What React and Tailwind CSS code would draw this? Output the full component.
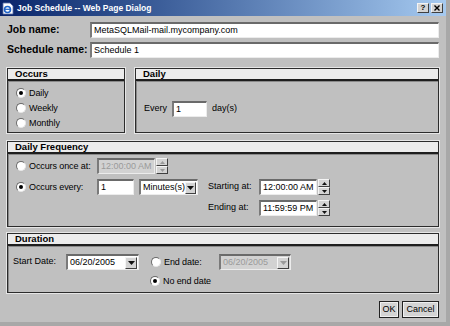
import React from 'react';

const FONT = { fontFamily: '"Liberation Sans", Arial, sans-serif' };

const sunken = 'border-t-2 border-l-2 border-b border-r border-t-[#6a6a6a] border-l-[#7a7a7a] border-b-[#ececec] border-r-[#ececec]';
const raised = 'border border-t-[#f4f4f4] border-l-[#f4f4f4] border-b-[#404040] border-r-[#404040]';

const TextBox = ({ value, className = '', disabled }) => (
  <div
    className={`flex items-center shrink-0 h-[16px] px-[2px] text-[9px] leading-none ${sunken} ${disabled ? 'bg-[#d2d2d2] text-[#9a9a9a]' : 'bg-white text-black'} ${className}`}
  >
    {value}
  </div>
);

const Arrow = ({ up, disabled, size = 3 }) => (
  <svg width={size * 2 + 1} height={size + 1} viewBox={`0 0 ${size * 2 + 1} ${size + 1}`}>
    <path
      d={up ? `M0 ${size + 1}L${size + 0.5} 0L${size * 2 + 1} ${size + 1}Z` : `M0 0L${size * 2 + 1} 0L${size + 0.5} ${size + 1}Z`}
      fill={disabled ? '#9a9a9a' : '#111'}
    />
  </svg>
);

const Spinner = ({ value, disabled }) => (
  <div className="flex items-center gap-[1px] shrink-0">
    <TextBox value={value} disabled={disabled} className="w-[58px]" />
    <div className="flex flex-col h-[16px] w-[12px]">
      <div className={`flex-1 flex items-center justify-center bg-[#d4d4d4] ${raised}`}>
        <Arrow up disabled={disabled} size={2} />
      </div>
      <div className={`flex-1 flex items-center justify-center bg-[#d4d4d4] ${raised}`}>
        <Arrow disabled={disabled} size={2} />
      </div>
    </div>
  </div>
);

const Select = ({ value, className = '', disabled }) => (
  <div
    className={`flex items-center shrink-0 h-[16px] pl-[2px] pr-[1px] text-[9px] leading-none ${sunken} ${disabled ? 'bg-[#d2d2d2] text-[#9a9a9a]' : 'bg-white text-black'} ${className}`}
  >
    <span className="flex-1">{value}</span>
    <div className={`flex items-center justify-center w-[12px] h-[12px] bg-[#d4d4d4] ${raised}`}>
      <Arrow disabled={disabled} />
    </div>
  </div>
);

const Radio = ({ checked, label }) => (
  <div className="flex items-center h-[10px] leading-none">
    <div className="flex shrink-0 items-center justify-center w-[10px] h-[10px] rounded-full bg-white border border-t-[#6a6a6a] border-l-[#6a6a6a] border-b-[#e8e8e8] border-r-[#e8e8e8]">
      {checked && <div className="w-[4px] h-[4px] rounded-full bg-black" />}
    </div>
    <span className="ml-[3px] text-[9px] tracking-[-0.1px] whitespace-nowrap">{label}</span>
  </div>
);

const Group = ({ title, className = '', children }) => (
  <div className={`flex flex-col border border-[#2c2c2c] outline outline-1 outline-[#e6e6e6] ${className}`}>
    <div className="h-[12px] flex items-center pl-[7px] bg-[#ececec] border-b-2 border-[#1e1e1e] text-[9.5px] font-bold leading-none">
      {title}
    </div>
    <div className="flex-1 border-l border-t border-[#8a8a8a]">{children}</div>
  </div>
);

const TitleButton = ({ children }) => (
  <div className={`flex items-center justify-center w-[12px] h-[10px] bg-[#d4d4d4] text-[8px] font-bold leading-none ${raised}`}>
    {children}
  </div>
);

export default function App() {
  return (
    <div style={FONT} className="w-[450px] h-[326px] bg-[#c0c0c0] text-black flex flex-col border-r-[4px] border-b-[4px] border-r-[#a8a8a8] border-b-[#a8a8a8] overflow-hidden">
      {/* title bar */}
      <div className="h-[16px] flex items-center bg-linear-to-r from-[#0a246a] to-[#a6caf0] pl-[2px] pr-[2px]">
        <svg width="12" height="13" viewBox="0 0 12 13">
          <path d="M1 1h7l3 3v8H1z" fill="#fff" stroke="#5a6fa8" strokeWidth="0.8" />
          <circle cx="5.5" cy="7.5" r="3" fill="none" stroke="#1e63c8" strokeWidth="1.6" />
          <path d="M3 7.3h5" stroke="#1e63c8" strokeWidth="1.2" />
        </svg>
        <span className="ml-[3px] text-[8.5px] font-bold text-white leading-none">Job Schedule -- Web Page Dialog</span>
        <div className="ml-auto flex gap-[2px] mr-[1px]">
          <TitleButton>?</TitleButton>
          <TitleButton>
            <svg width="6" height="6" viewBox="0 0 6 6">
              <path d="M0.5 0.5L5.5 5.5M5.5 0.5L0.5 5.5" stroke="#000" strokeWidth="1.4" />
            </svg>
          </TitleButton>
        </div>
      </div>

      <div className="flex flex-col pl-[7px] pr-[7px]">
        <div className="flex items-center mt-[6px]">
          <span className="w-[83px] text-[10.5px] font-bold">Job name:</span>
          <TextBox value="MetaSQLMail-mail.mycompany.com" className="flex-1 h-[15px] text-[9.5px]" />
        </div>
        <div className="flex items-center mt-[4px]">
          <span className="w-[83px] text-[10.5px] font-bold">Schedule name:</span>
          <TextBox value="Schedule 1" className="flex-1 h-[15px] text-[9.5px]" />
        </div>

        <div className="flex gap-[10px] mt-[10px] h-[65px]">
          <Group title="Occurs" className="w-[118px]">
            <div className="flex flex-col gap-[5px] pl-[7px] pt-[6px]">
              <Radio checked label="Daily" />
              <Radio label="Weekly" />
              <Radio label="Monthly" />
            </div>
          </Group>
          <Group title="Daily" className="flex-1">
            <div className="flex items-center pl-[7px] pt-[19px] text-[9px]">
              <span>Every</span>
              <TextBox value="1" className="w-[35px] ml-[5px] h-[15px]" />
              <span className="ml-[5px]">day(s)</span>
            </div>
          </Group>
        </div>

        <Group title="Daily Frequency" className="mt-[8px] h-[86px]">
          <div className="flex flex-col pl-[7px] pt-[3px] gap-[5px]">
            <div className="flex items-center">
              <div className="w-[81px] shrink-0">
                <Radio label="Occurs once at:" />
              </div>
              <Spinner value="12:00:00 AM" disabled />
            </div>
            <div className="flex items-center">
              <div className="w-[81px] shrink-0">
                <Radio checked label="Occurs every:" />
              </div>
              <TextBox value="1" className="w-[37px]" />
              <Select value="Minutes(s)" className="w-[59px] ml-[5px]" />
              <span className="w-[51px] ml-[10px] text-[9px]">Starting at:</span>
              <Spinner value="12:00:00 AM" />
            </div>
            <div className="flex items-center pl-[192px]">
              <span className="w-[51px] text-[9px]">Ending at:</span>
              <Spinner value="11:59:59 PM" />
            </div>
          </div>
        </Group>

        <Group title="Duration" className="mt-[6px] h-[60px]">
          <div className="flex flex-col pl-[4px] pt-[7px] gap-[6px]">
            <div className="flex items-center">
              <span className="w-[53px] text-[9px]">Start Date:</span>
              <Select value="06/20/2005" className="w-[73px]" />
              <div className="w-[68px] ml-[12px] shrink-0">
                <Radio label="End date:" />
              </div>
              <Select value="06/20/2005" disabled className="w-[72px]" />
            </div>
            <div className="pl-[137px]">
              <Radio checked label="No end date" />
            </div>
          </div>
        </Group>

        <div className="flex justify-end gap-[3px] mt-[8px]">
          <button className="w-[20px] h-[17px] bg-[#d4d4d4] border border-[#222] text-[9px] leading-none outline outline-1 outline-offset-[-2px] outline-[#f0f0f0]">
            OK
          </button>
          <button className="w-[37px] h-[17px] bg-[#d4d4d4] border border-[#222] text-[9px] leading-none outline outline-1 outline-offset-[-2px] outline-[#f0f0f0]">
            Cancel
          </button>
        </div>
      </div>
    </div>
  );
}
